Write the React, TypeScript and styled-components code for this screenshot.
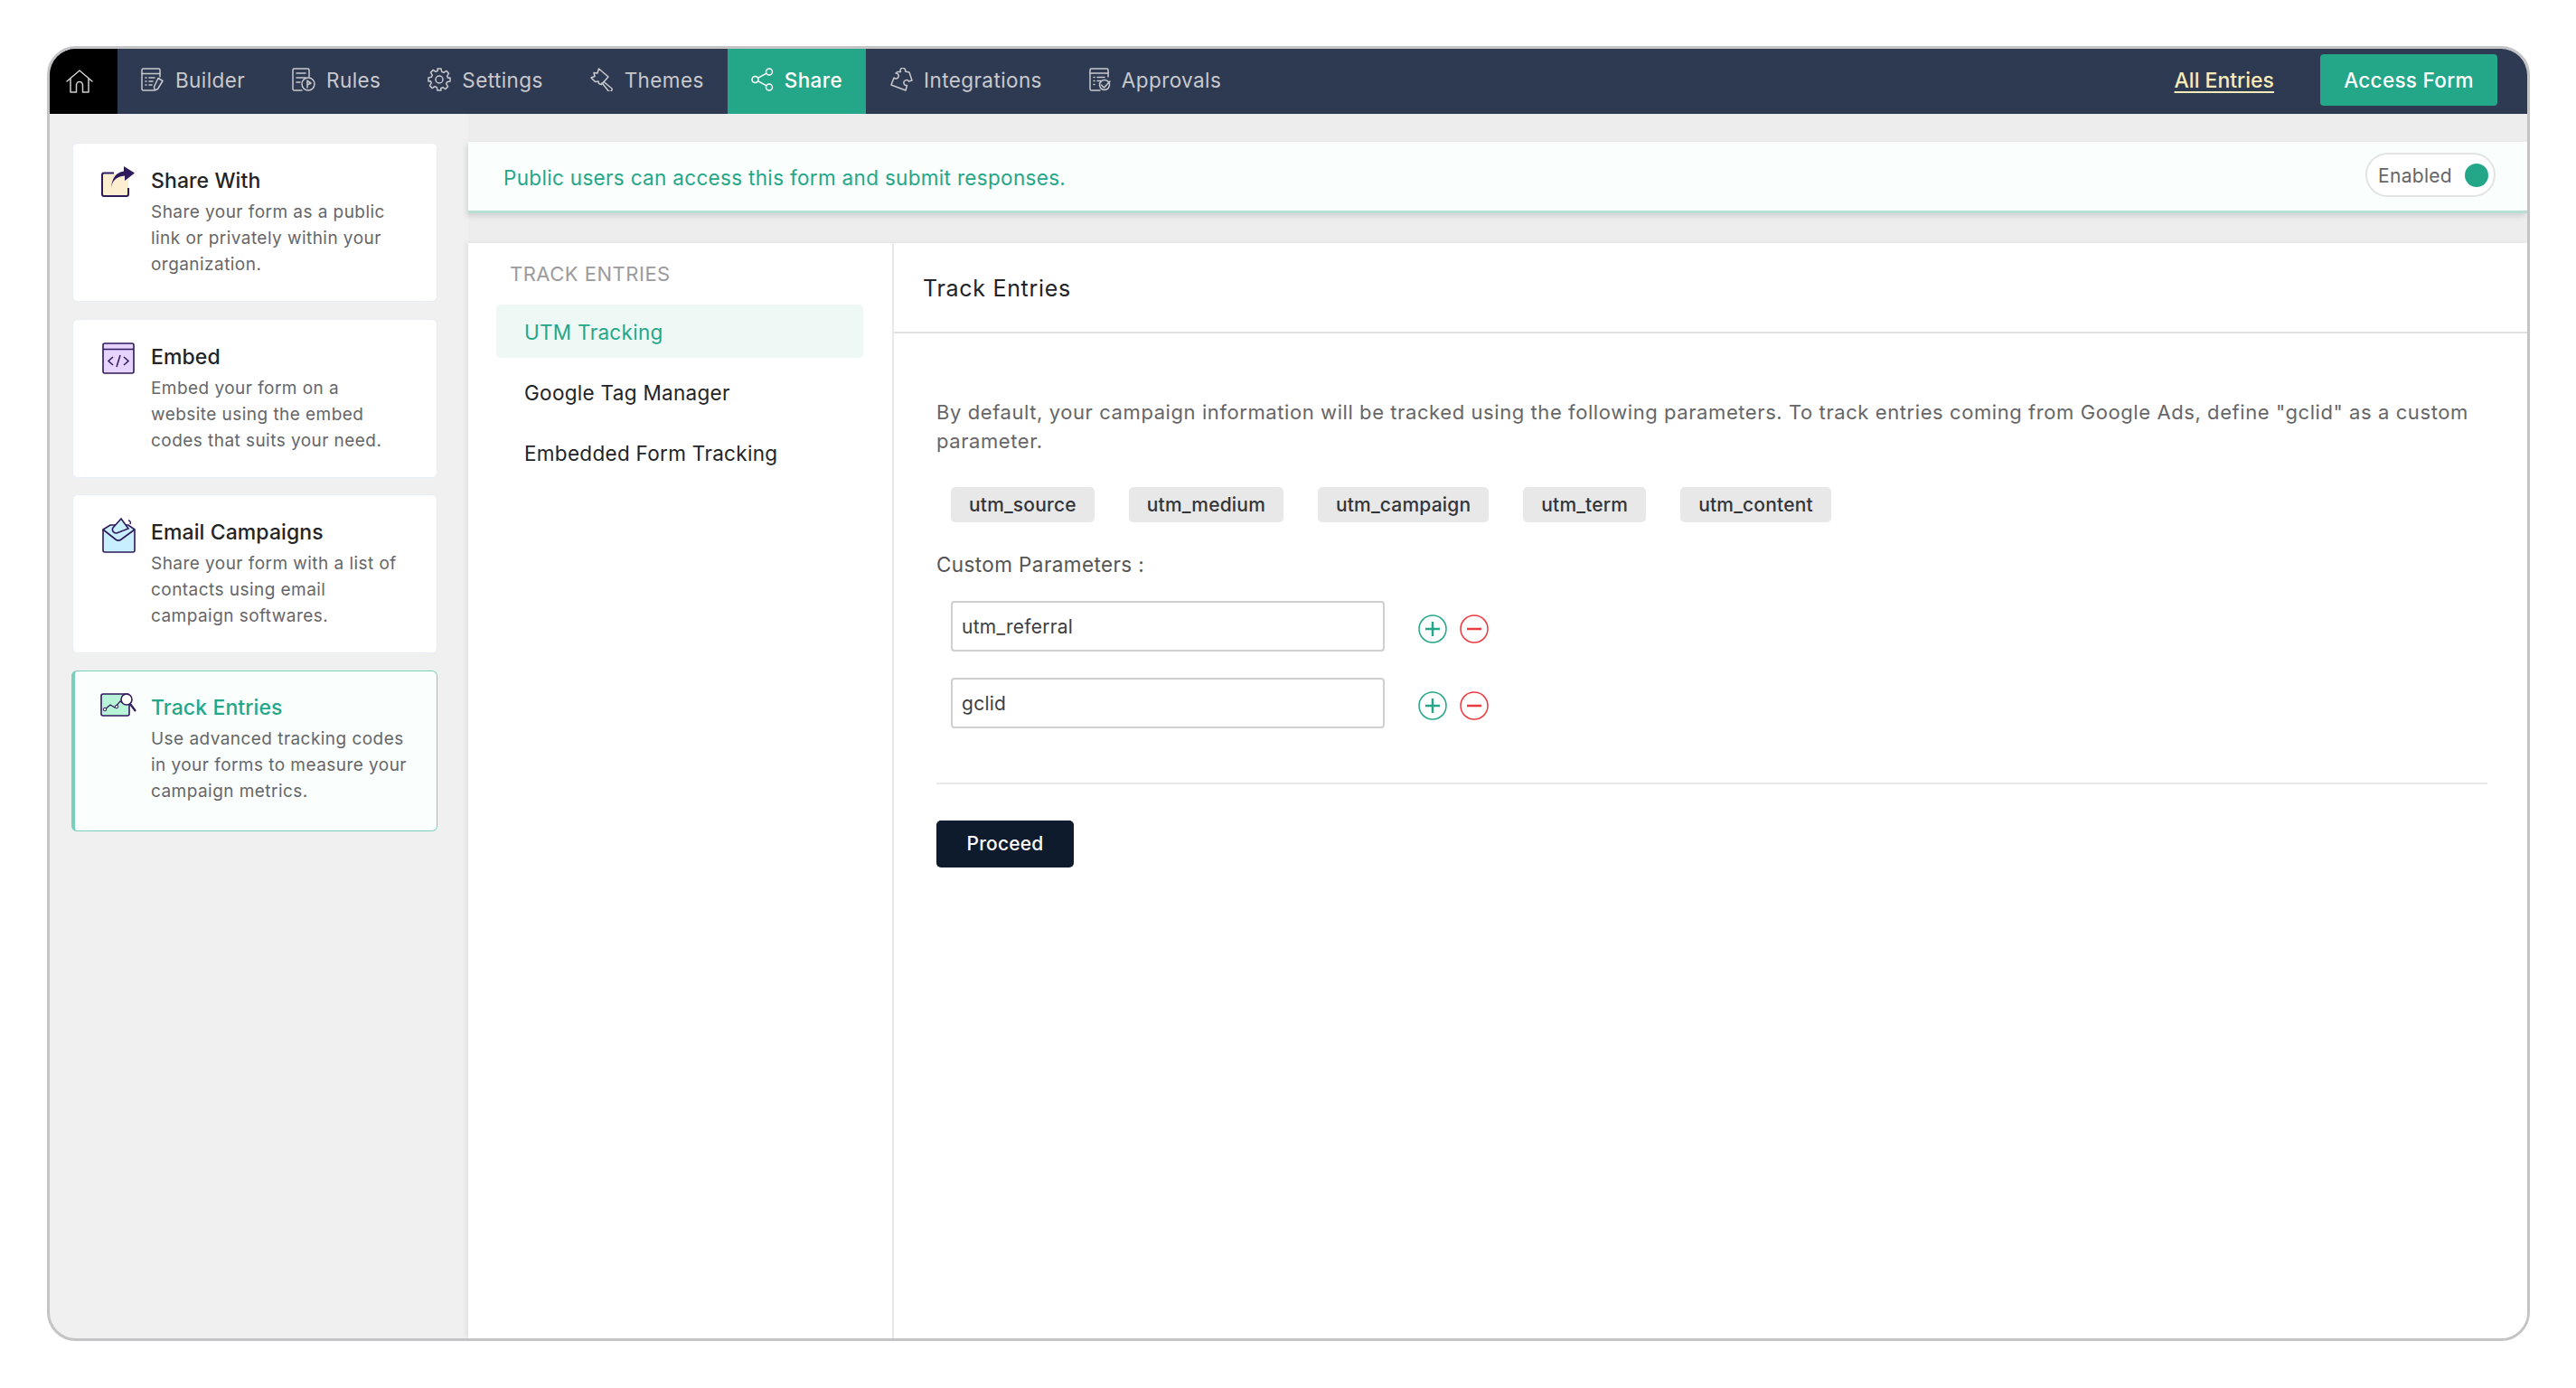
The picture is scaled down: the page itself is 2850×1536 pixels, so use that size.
import React from "react";
import styled, { createGlobalStyle } from "styled-components";

const Green = "#24a789";
const Navy = "#2e3a52";
const NavText = "#c9c9cd";
const Ink = "#222428";
const Muted = "#666668";
const Purple = "#2f1a5c";

const GlobalStyle = createGlobalStyle`
  html, body {
    margin: 0;
    padding: 0;
    background: #fff;
    font-family: Inter, "Liberation Sans", sans-serif;
  }
  * { box-sizing: border-box; }
`;

const Frame = styled.div`
  width: 2747px;
  height: 1433px;
  margin: 51px 0 0 52px;
  border: 3px solid #c4c4c6;
  border-radius: 32px;
  overflow: hidden;
  display: flex;
  flex-direction: column;
  background: #f0f0f1;
`;

const TopBar = styled.header`
  height: 72px;
  flex: none;
  display: flex;
  align-items: stretch;
  background: ${Navy};
`;

const HomeButton = styled.div`
  width: 75px;
  padding-right: 10px;
  background: #000;
  display: flex;
  align-items: center;
  justify-content: center;
`;

const NavItem = styled.div<{ $active?: boolean }>`
  display: flex;
  align-items: center;
  gap: 12px;
  padding: 0 26px 4px;
  font-size: 22.5px;
  letter-spacing: 0.4px;
  font-weight: ${({ $active }) => ($active ? 500 : 400)};
  color: ${({ $active }) => ($active ? "#fff" : NavText)};
  background: ${({ $active }) => ($active ? Green : "transparent")};
`;

const TopRight = styled.div`
  margin-left: auto;
  display: flex;
  align-items: center;
  gap: 51px;
  padding-right: 33px;
`;

const EntriesLink = styled.a`
  margin-bottom: 2px;
  font-size: 23px;
  font-weight: 500;
  color: #f7ecb8;
  text-decoration: underline;
  text-underline-offset: 4px;
`;

const AccessButton = styled.button`
  width: 196px;
  height: 57px;
  margin-bottom: 3px;
  border: 0;
  border-radius: 4px;
  background: ${Green};
  color: #fff;
  font-family: inherit;
  font-size: 22.5px;
  font-weight: 500;
  letter-spacing: 0.3px;
`;

const Body = styled.div`
  flex: 1;
  min-height: 0;
  display: flex;
`;

const CardColumn = styled.aside`
  width: 463px;
  flex: none;
  padding: 32px 0 0 25px;
  display: flex;
  flex-direction: column;
  gap: 18.5px;
`;

const Card = styled.div<{ $active?: boolean }>`
  width: ${({ $active }) => ($active ? 405 : 404)}px;
  height: ${({ $active }) => ($active ? 178 : 176)}px;
  margin-left: ${({ $active }) => ($active ? -1 : 0)}px;
  display: flex;
  gap: 15px;
  padding: ${({ $active }) => ($active ? "24px 6px 0 27px" : "25px 6px 0 29px")};
  border-radius: 6px;
  background: ${({ $active }) => ($active ? "#fafefd" : "#fff")};
  border: 1px solid ${({ $active }) => ($active ? "#78d0bc" : "#e9edf6")};
  border-left: ${({ $active }) => ($active ? "4px solid #78d0bc" : "1px solid #e9edf6")};
`;

const CardIcon = styled.div`
  width: 42px;
  flex: none;
  display: flex;
  justify-content: center;
`;

const CardTitle = styled.div<{ $active?: boolean }>`
  font-size: 23px;
  font-weight: 500;
  line-height: 32px;
  letter-spacing: 0.1px;
  color: ${({ $active }) => ($active ? Green : Ink)};
`;

const CardText = styled.div`
  margin-top: 4px;
  font-size: 19px;
  line-height: 29px;
  letter-spacing: 0.45px;
  color: ${Muted};
  white-space: pre-line;
`;

const MainColumn = styled.main`
  flex: 1;
  min-width: 0;
  display: flex;
  flex-direction: column;
  background: #ededee;
  padding-top: 31px;
`;

const Banner = styled.div`
  height: 79px;
  flex: none;
  display: flex;
  align-items: center;
  justify-content: space-between;
  padding: 0 35px 3px 39px;
  background: #fafefd;
  border-bottom: 3px solid #b7dfd4;
  box-shadow: -2px 3px 6px rgba(0, 0, 0, 0.12);
`;

const BannerText = styled.div`
  font-size: 22.5px;
  letter-spacing: 0.32px;
  color: ${Green};
  position: relative;
  top: 3px;
`;

const EnabledToggle = styled.div`
  width: 144px;
  height: 49px;
  display: flex;
  align-items: center;
  justify-content: space-between;
  padding: 2px 6px 0 12px;
  border: 2px solid #e2e4e4;
  border-radius: 25px;
  background: #fff;
  font-size: 21px;
  letter-spacing: 0.3px;
  color: ${Muted};
`;

const ToggleDot = styled.span`
  width: 26px;
  height: 26px;
  margin-top: -2px;
  border-radius: 50%;
  background: ${Green};
`;

const WorkArea = styled.div`
  flex: 1;
  min-height: 0;
  margin-top: 33px;
  display: flex;
  background: #fff;
  box-shadow: -3px 0 5px rgba(0, 0, 0, 0.06);
`;

const SubNav = styled.nav`
  width: 471px;
  flex: none;
  padding: 20px 32px 0 31px;
  border-right: 2px solid #e8e8e8;
`;

const SubNavHeading = styled.div`
  height: 28px;
  padding-left: 15px;
  margin-bottom: 20px;
  font-size: 22px;
  line-height: 28px;
  letter-spacing: 0.5px;
  color: #9b9b9d;
`;

const SubNavItem = styled.div<{ $active?: boolean }>`
  height: 59px;
  margin-bottom: 8px;
  padding: 2px 0 0 31px;
  display: flex;
  align-items: center;
  border-radius: 5px;
  font-size: 22.5px;
  letter-spacing: 0.3px;
  color: ${({ $active }) => ($active ? Green : Ink)};
  background: ${({ $active }) => ($active ? "#eef8f5" : "transparent")};
`;

const Content = styled.section`
  flex: 1;
  min-width: 0;
  display: flex;
  flex-direction: column;
`;

const ContentHeader = styled.div`
  height: 100px;
  flex: none;
  display: flex;
  align-items: center;
  padding: 2px 0 0 32px;
  border-bottom: 2px solid #e2e2e2;
  font-size: 25px;
  letter-spacing: 0.7px;
  color: ${Ink};
`;

const ContentBody = styled.div`
  padding: 71px 44px 0 47px;
`;

const Intro = styled.p`
  margin: 0;
  font-size: 22px;
  line-height: 32px;
  letter-spacing: 0.58px;
  color: ${Muted};
`;

const ChipRow = styled.div`
  display: flex;
  gap: 38px;
  margin: 35px 0 0 16px;
`;

const Chip = styled.span`
  height: 39px;
  padding: 0 20px;
  display: flex;
  align-items: center;
  border-radius: 5px;
  background: #e8e8e9;
  font-size: 21px;
  font-weight: 500;
  letter-spacing: 0.18px;
  color: #333538;
`;

const FieldLabel = styled.div`
  margin-top: 32px;
  font-size: 22.5px;
  line-height: 30px;
  letter-spacing: 0.4px;
  color: #555;
`;

const ParamList = styled.div`
  margin: 25px 0 0 16px;
  display: flex;
  flex-direction: column;
  gap: 29px;
`;

const ParamRow = styled.div`
  display: flex;
  align-items: center;
`;

const ParamInput = styled.div`
  width: 480px;
  height: 56px;
  padding-left: 10px;
  display: flex;
  align-items: center;
  border: 2px solid #cfcfd0;
  border-radius: 4px;
  font-size: 21px;
  letter-spacing: 0.25px;
  color: #3e3e40;
`;

const ParamActions = styled.div`
  display: flex;
  gap: 14px;
  margin: 5px 0 0 37px;
`;

const Divider = styled.hr`
  margin: 60px 0 0;
  border: 0;
  border-top: 2px solid #e9e9e9;
`;

const ProceedButton = styled.button`
  display: block;
  width: 152px;
  height: 52px;
  margin-top: 40px;
  padding: 0 0 2px;
  border: 0;
  border-radius: 5px;
  background: #0e1b2d;
  color: #fff;
  font-family: inherit;
  font-size: 21px;
  font-weight: 500;
  letter-spacing: 0.2px;
`;

const Line = styled.svg.attrs({
  fill: "none",
  stroke: "currentColor",
  strokeWidth: 1.5,
  strokeLinecap: "round",
  strokeLinejoin: "round",
})`
  flex: none;
  display: block;
`;

const HomeIcon = () => (
  <Line width={30} height={26} viewBox="0 0 30 26" color="#cfcfd2">
    <path d="M1 13 15 1l14 12" />
    <path d="M5 10.500V25h6.500v-8a3.500 3.500 0 0 1 7 0v8H25V10.500" />
  </Line>
);

const BuilderIcon = () => (
  <Line width={26} height={26} viewBox="0 0 26 26">
    <path d="M21 10V2.500a1.500 1.500 0 0 0-1.500-1.500h-17A1.500 1.500 0 0 0 1 2.500v21A1.500 1.500 0 0 0 2.500 25H14" />
    <path d="M1 6.500h20" />
    <path d="M5 11h1M9 11h6M5 15h1M9 15h4M5 19h1M9 19h3" />
    <path d="M19 11.500l5 3-5.500 9-3.500 1.500-.5-4z" />
  </Line>
);

const RulesIcon = () => (
  <Line width={26} height={26} viewBox="0 0 26 26">
    <path d="M19 10V2.500A1.500 1.500 0 0 0 17.500 1h-15A1.500 1.500 0 0 0 1 2.500v21A1.500 1.500 0 0 0 2.500 25H11" />
    <path d="M5 6h10M5 11h10M5 16h4" />
    <circle cx="18" cy="18" r="7" />
    <path d="M17 14v8M17 14.500l4 2.500-4 2" />
  </Line>
);

const SettingsIcon = () => (
  <Line width={26} height={26} viewBox="0 0 26 26">
    <circle cx="13" cy="13" r="4" />
    <path d="M11 1h4l.7 3.400 2.200.9 2.900-1.900 2.800 2.800-1.900 2.900.9 2.200L25 11v4l-3.400.7-.9 2.200 1.900 2.900-2.800 2.800-2.900-1.900-2.200.9L15 25h-4l-.7-3.400-2.200-.9-2.900 1.900-2.800-2.800 1.900-2.900-.9-2.200L1 15v-4l3.400-.7.9-2.200-1.900-2.900 2.800-2.800 2.900 1.900 2.200-.9z" />
  </Line>
);

const ThemesIcon = () => (
  <Line width={26} height={26} viewBox="0 0 26 26">
    <path d="M1 11l4-1.500L4 5.500l4 .5L9.500 1 20 10l-7.500 8.500-3-1-.5-2.500-3.500.5z" />
    <path d="M15 15.500l9 7.500a2.500 2.500 0 0 1-3.800 2.800l-7.200-9" />
  </Line>
);

const ShareIcon = () => (
  <Line width={25} height={26} viewBox="0 0 25 26" strokeWidth={1.8}>
    <circle cx="4.500" cy="13" r="3.500" />
    <circle cx="20" cy="4.500" r="3.500" />
    <circle cx="20" cy="21.500" r="3.500" />
    <path d="M7.500 11.300 17 6.200M7.500 14.700 17 19.800" />
  </Line>
);

const IntegrationsIcon = () => (
  <Line width={26} height={26} viewBox="0 0 26 26">
    <path d="M9 4.500h3.500a2.800 2.800 0 1 1 5-.5L22 5l3 9-3.500 1a3 3 0 1 0-2 4.500L18 25 2 19l3-8a3 3 0 1 0 2-5z" />
  </Line>
);

const ApprovalsIcon = () => (
  <Line width={24} height={26} viewBox="0 0 24 26">
    <path d="M21 10V2.500A1.500 1.500 0 0 0 19.500 1h-17A1.500 1.500 0 0 0 1 2.500v21A1.500 1.500 0 0 0 2.500 25H12" />
    <path d="M1 6h20M5 10.500h1M9 10.500h8M5 14.500h1M9 14.500h4M5 18.500h1" />
    <circle cx="17" cy="19" r="5.500" />
    <path d="M13.500 19l3 3 6.500-7" />
  </Line>
);

const ShareWithIcon = () => (
  <svg width="38" height="34" viewBox="0 0 38 34" fill="none" style={{ display: "block" }}>
    <path d="M2 9h28v22a2 2 0 0 1-2 2H4a2 2 0 0 1-2-2z" fill="#fdeed0" />
    <path d="M14 7.500H3a2 2 0 0 0-2 2V31a2 2 0 0 0 2 2h25a2 2 0 0 0 2-2v-7" stroke={Purple} strokeWidth="2" />
    <path d="M11 24c1-8 6-13 15-13.500V16L37 7.500 25 0v5.500C16 7 12 13 11 24z" fill={Purple} />
  </svg>
);

const EmbedIcon = () => (
  <svg width="36" height="35" viewBox="0 0 36 35" fill="none" style={{ display: "block" }}>
    <rect x="1" y="1" width="34" height="33" rx="2" fill="#e6d3ff" stroke={Purple} strokeWidth="1.600" />
    <path d="M1 7.500h34" stroke={Purple} strokeWidth="1.600" />
    <path d="M12 16l-5 4.500 5 4.500M24 16l5 4.500-5 4.500M20 14l-4 13" stroke={Purple} strokeWidth="1.500" />
  </svg>
);

const EmailIcon = () => (
  <svg width="37" height="39" viewBox="0 0 37 39" fill="none" style={{ display: "block" }}>
    <path d="M1 13l8-5h20l7 5v23a2 2 0 0 1-2 2H3a2 2 0 0 1-2-2z" fill="#c8efff" stroke={Purple} strokeWidth="1.600" />
    <path d="M12 11 21 1l8 11-13 5a4 4 0 0 1-4-6z" fill="#c8efff" stroke={Purple} strokeWidth="1.600" />
    <path d="M1 13l14 11c2 1.500 4 1.500 6 0l15-11" stroke={Purple} strokeWidth="1.600" />
    <path d="M29 3c2 0 3 2 2 4" stroke={Purple} strokeWidth="1.400" />
  </svg>
);

const TrackIcon = () => (
  <svg width="40" height="26" viewBox="0 0 40 26" fill="none" style={{ display: "block" }}>
    <rect x="1" y="1" width="31" height="24" rx="2" fill="#b8f5d8" stroke={Purple} strokeWidth="1.600" />
    <path d="M5 18l6-5 5 3 6-7 5 3" stroke={Purple} strokeWidth="1.300" />
    <circle cx="5" cy="18" r="1.800" fill="#fff" stroke={Purple} />
    <circle cx="18" cy="15" r="1.800" fill="#fff" stroke={Purple} />
    <circle cx="29" cy="7" r="6" fill="#fff" stroke={Purple} strokeWidth="1.600" />
    <path d="M33 12l6 8" stroke={Purple} strokeWidth="2.200" />
  </svg>
);

const RoundIcon = ({ color, plus }: { color: string; plus?: boolean }) => (
  <svg width="32" height="32" viewBox="0 0 32 32" fill="none" style={{ display: "block" }}>
    <circle cx="16" cy="16" r="15" stroke={color} strokeWidth="1.500" />
    <path d={plus ? "M8 16h16M16 8v16" : "M8 16h16"} stroke={color} strokeWidth="2.500" />
  </svg>
);

const navItems = [
  { label: "Builder", icon: <BuilderIcon /> },
  { label: "Rules", icon: <RulesIcon /> },
  { label: "Settings", icon: <SettingsIcon /> },
  { label: "Themes", icon: <ThemesIcon /> },
  { label: "Share", icon: <ShareIcon />, active: true },
  { label: "Integrations", icon: <IntegrationsIcon /> },
  { label: "Approvals", icon: <ApprovalsIcon /> },
];

const cards = [
  {
    title: "Share With",
    text: "Share your form as a public\nlink or privately within your\norganization.",
    icon: <ShareWithIcon />,
  },
  {
    title: "Embed",
    text: "Embed your form on a\nwebsite using the embed\ncodes that suits your need.",
    icon: <EmbedIcon />,
  },
  {
    title: "Email Campaigns",
    text: "Share your form with a list of\ncontacts using email\ncampaign softwares.",
    icon: <EmailIcon />,
  },
  {
    title: "Track Entries",
    text: "Use advanced tracking codes\nin your forms to measure your\ncampaign metrics.",
    icon: <TrackIcon />,
    active: true,
  },
];

const chips = ["utm_source", "utm_medium", "utm_campaign", "utm_term", "utm_content"];
const params = ["utm_referral", "gclid"];

export default function App() {
  return (
    <>
      <GlobalStyle />
      <Frame>
        <TopBar>
          <HomeButton>
            <HomeIcon />
          </HomeButton>
          {navItems.map((item) => (
            <NavItem key={item.label} $active={item.active}>
              {item.icon}
              {item.label}
            </NavItem>
          ))}
          <TopRight>
            <EntriesLink>All Entries</EntriesLink>
            <AccessButton>Access Form</AccessButton>
          </TopRight>
        </TopBar>
        <Body>
          <CardColumn>
            {cards.map((card) => (
              <Card key={card.title} $active={card.active}>
                <CardIcon>{card.icon}</CardIcon>
                <div>
                  <CardTitle $active={card.active}>{card.title}</CardTitle>
                  <CardText>{card.text}</CardText>
                </div>
              </Card>
            ))}
          </CardColumn>
          <MainColumn>
            <Banner>
              <BannerText>Public users can access this form and submit responses.</BannerText>
              <EnabledToggle>
                Enabled
                <ToggleDot />
              </EnabledToggle>
            </Banner>
            <WorkArea>
              <SubNav>
                <SubNavHeading>TRACK ENTRIES</SubNavHeading>
                <SubNavItem $active>UTM Tracking</SubNavItem>
                <SubNavItem>Google Tag Manager</SubNavItem>
                <SubNavItem>Embedded Form Tracking</SubNavItem>
              </SubNav>
              <Content>
                <ContentHeader>Track Entries</ContentHeader>
                <ContentBody>
                  <Intro>
                    By default, your campaign information will be tracked using the following parameters. To track
                    entries coming from Google Ads, define "gclid" as a custom parameter.
                  </Intro>
                  <ChipRow>
                    {chips.map((chip) => (
                      <Chip key={chip}>{chip}</Chip>
                    ))}
                  </ChipRow>
                  <FieldLabel>Custom Parameters :</FieldLabel>
                  <ParamList>
                    {params.map((param) => (
                      <ParamRow key={param}>
                        <ParamInput>{param}</ParamInput>
                        <ParamActions>
                          <RoundIcon color={Green} plus />
                          <RoundIcon color="#ec3a3f" />
                        </ParamActions>
                      </ParamRow>
                    ))}
                  </ParamList>
                  <Divider />
                  <ProceedButton>Proceed</ProceedButton>
                </ContentBody>
              </Content>
            </WorkArea>
          </MainColumn>
        </Body>
      </Frame>
    </>
  );
}
